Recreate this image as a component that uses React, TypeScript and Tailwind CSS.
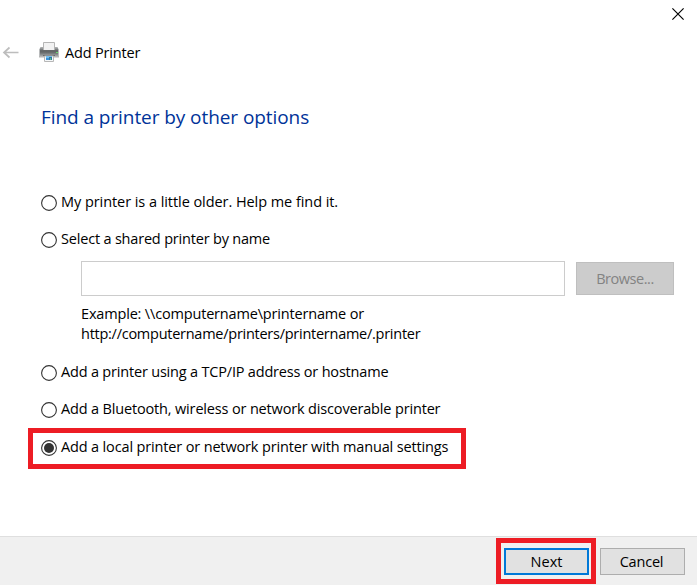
import { useState } from "react";

function BackArrow() {
  return (
    <svg width="17" height="13" viewBox="0 0 17 13" fill="none" stroke="#bdbdbd" strokeWidth="1.7">
      <path d="M16.500 6.500H2M7.500 1.500L2 6.500L7.500 11.500" />
    </svg>
  );
}

function PrinterIcon() {
  return (
    <svg width="20" height="20" viewBox="0 0 20 20">
      <defs>
        <linearGradient id="body" x1="0" y1="0" x2="0" y2="1">
          <stop offset="0" stopColor="#a2a4a5" />
          <stop offset="0.35" stopColor="#5e6162" />
          <stop offset="0.6" stopColor="#6d7071" />
          <stop offset="1" stopColor="#a5a7a8" />
        </linearGradient>
      </defs>
      <path d="M4.500 .5h11v8h-11z" fill="#f2f2f2" stroke="#b5b5b5" />
      <path d="M1.500 5H4v3h12V5h2.500L20 8v7H0V8z" fill="#a9abac" />
      <path d="M1 6h3v2h12V6h3v8H1z" fill="url(#body)" />
      <path d="M0 8h1v7H0zM19 8h1v7h-1z" fill="#b9bbbc" />
      <path d="M17 10h2v1h-2z" fill="#67d96b" />
      <path d="M0 14h20v1.500H0z" fill="#b5b5b5" />
      <path d="M4 13h12v1H4z" fill="#686b6c" />
      <path d="M5.500 14h9v5.500h-9z" fill="#f5f7f8" stroke="#b7b7b7" />
      <path d="M7 14h6v3H7z" fill="#75bdec" />
      <path d="M7 16h3v2H7z" fill="#3a92dd" />
      <path d="M10 15h3v3h-3z" fill="#31799f" />
      <path d="M11 16h1v2h-1z" fill="#61bd86" />
    </svg>
  );
}

type OptionProps = {
  label: string;
  checked: boolean;
  onSelect: () => void;
  textClass: string;
};

function Option({ label, checked, onSelect, textClass }: OptionProps) {
  return (
    <label className="flex h-5 items-center gap-1">
      <input type="radio" name="method" checked={checked} onChange={onSelect} className="sr-only" />
      <svg width="16" height="16" viewBox="0 0 16 16" className="mt-0.5 shrink-0">
        <circle cx="8" cy="8" r="7.4" fill="#fff" stroke="#333" strokeWidth="1.1" />
        {checked && <circle cx="8" cy="8" r="5" fill="#333" />}
      </svg>
      <span className={"whitespace-nowrap " + textClass}>{label}</span>
    </label>
  );
}

export default function App() {
  const [method, setMethod] = useState(4);
  return (
    <div className="flex h-[585px] w-[697px] flex-col overflow-hidden bg-white font-['Open_Sans','Noto_Sans',sans-serif] text-[14.5px] leading-5 text-black">
      <div className="flex h-7 justify-end pt-2 pr-[13px]">
        <svg width="12" height="12" viewBox="0 0 12 12" stroke="#000" strokeWidth="1.15">
          <path d="M.4.4l11.200 11.200M11.600.4L.4 11.600" />
        </svg>
      </div>
      <header className="mt-3.5 flex h-5 items-center pl-[2px]">
        <BackArrow />
        <span className="ml-5">
          <PrinterIcon />
        </span>
        <span className="ml-1.5 pt-px tracking-[-0.18px] whitespace-nowrap">Add Printer</span>
      </header>
      <main className="flex-1 pl-[41px]">
        <h1 className="mt-[41px] h-7 text-[19px] leading-7 tracking-[-0.07px] whitespace-nowrap text-[#003399]">
          Find a printer by other options
        </h1>
        <div className="mt-[61px]">
          <Option label="My printer is a little older. Help me find it." checked={method === 0} onSelect={() => setMethod(0)} textClass="tracking-[-0.06px]" />
        </div>
        <div className="mt-[17px]">
          <Option label="Select a shared printer by name" checked={method === 1} onSelect={() => setMethod(1)} textClass="tracking-[-0.19px]" />
        </div>
        <div className="mt-3 ml-10 flex items-center gap-[11px]">
          <input disabled className="h-[35px] w-[484px] border border-[#cccccc] bg-white" />
          <button disabled className="h-[33px] w-[98px] border border-[#bfbfbf] bg-[#cccccc] tracking-[-0.45px] text-[#838383]">
            Browse...
          </button>
        </div>
        <div className="mt-2 ml-10 whitespace-nowrap">
          <p className="tracking-[-0.17px]">Example: \\computername\printername or</p>
          <p className="tracking-[-0.26px]">http://computername/printers/printername/.printer</p>
        </div>
        <div className="mt-[18px]">
          <Option label="Add a printer using a TCP/IP address or hostname" checked={method === 2} onSelect={() => setMethod(2)} textClass="tracking-[-0.19px]" />
        </div>
        <div className="mt-[17px]">
          <Option label="Add a Bluetooth, wireless or network discoverable printer" checked={method === 3} onSelect={() => setMethod(3)} textClass="tracking-[-0.16px]" />
        </div>
        <div className="mt-[9px] -ml-[13px] h-[41px] w-[438px] border-[5px] border-[#ed1c24] pt-1 pl-2">
          <Option label="Add a local printer or network printer with manual settings" checked={method === 4} onSelect={() => setMethod(4)} textClass="tracking-[-0.15px]" />
        </div>
      </main>
      <footer className="flex h-[49px] items-start justify-end gap-1 border-t border-[#dfdfdf] bg-[#f0f0f0] pt-px pr-3">
        <div className="h-[46px] w-[100px] border-[5px] border-[#ed1c24] pt-[5px] pl-[3px]">
          <button className="h-[27px] w-[85px] border-2 border-[#0078d7] bg-[#e1e1e1] leading-5">Next</button>
        </div>
        <button className="mt-2.5 h-[27px] w-[85px] border border-[#adadad] bg-[#e1e1e1] pr-0.5 leading-5 tracking-[-0.2px]">Cancel</button>
      </footer>
    </div>
  );
}
